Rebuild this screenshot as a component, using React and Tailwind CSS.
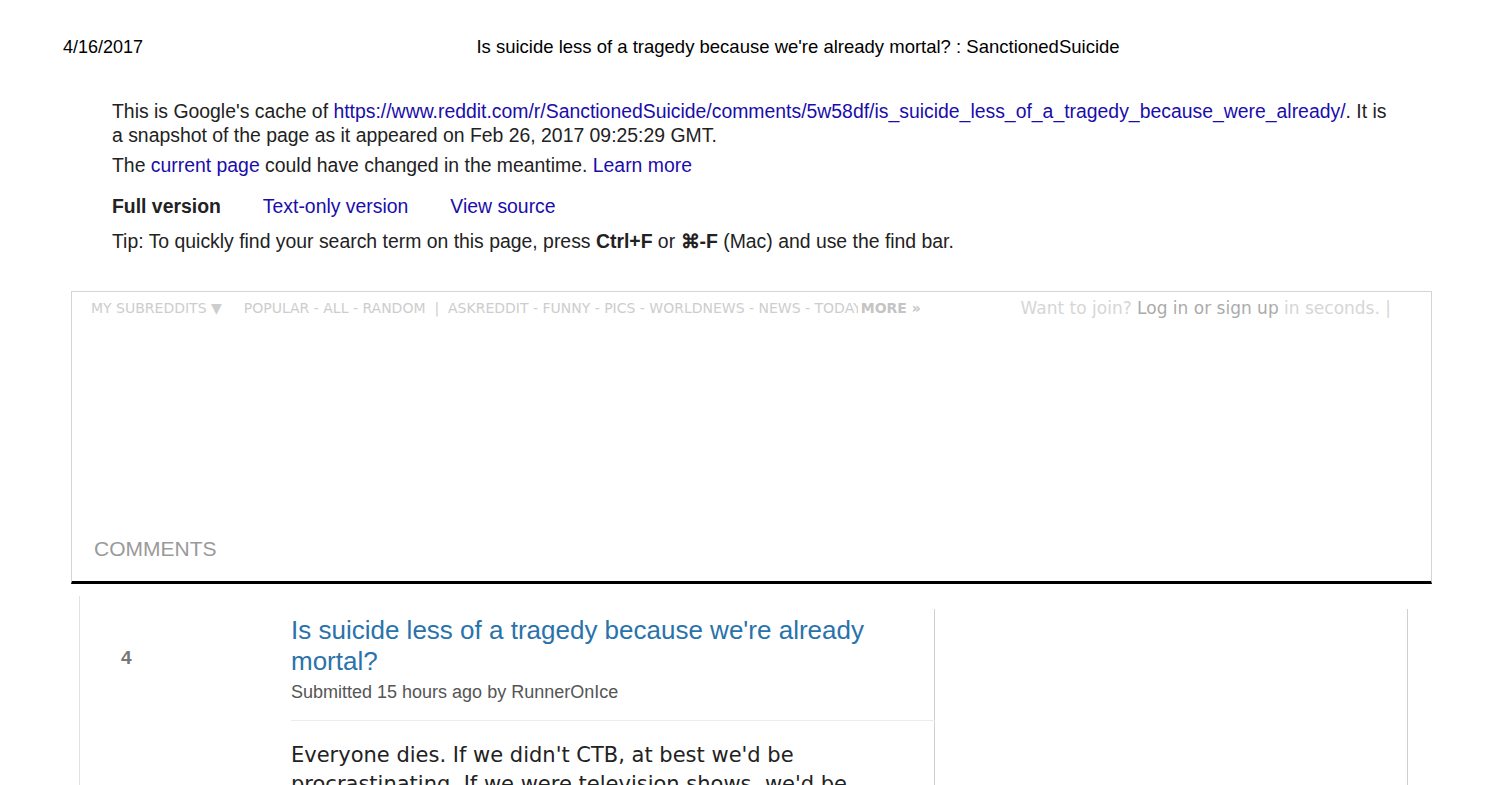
import React from 'react';

// Google cache print view of a reddit thread
const navLinks = ['ASKREDDIT', 'FUNNY', 'PICS', 'WORLDNEWS', 'NEWS', 'TODAYILEARNED'];

const App = () => {
  return (
    <div className="min-h-screen bg-white text-black font-['Liberation_Sans',Arial,sans-serif]">
      {/* print header */}
      <div className="flex pl-[63px] pr-[63px] pt-[37px] text-[18px] leading-[20px]">
        <div className="w-[96px] shrink-0">4/16/2017</div>
        <div className="flex-1 text-center text-[18.5px]">
          Is suicide less of a tragedy because we're already mortal? : SanctionedSuicide
        </div>
      </div>

      {/* cache notice */}
      <div className="pl-[112px] pr-[104px] mt-[42px] text-[19.4px] leading-[24px] text-[#222]">
        <p>
          This is Google's cache of{' '}
          <a className="text-[#1a0dab]">
            https://www.reddit.com/r/SanctionedSuicide/comments/5w58df/is_suicide_less_of_a_tragedy_because_were_already/
          </a>
          . It is a snapshot of the page as it appeared on Feb 26, 2017 09:25:29 GMT.
        </p>
        <p className="mt-[6px]">
          The <a className="text-[#1a0dab]">current page</a> could have changed in the meantime.{' '}
          <a className="text-[#1a0dab]">Learn more</a>
        </p>
        <div className="flex gap-[42px] mt-[17px]">
          <span className="font-bold">Full version</span>
          <a className="text-[#1a0dab]">Text-only version</a>
          <a className="text-[#1a0dab]">View source</a>
        </div>
        <p className="mt-[11px]">
          Tip: To quickly find your search term on this page, press <b>Ctrl+F</b> or <b>⌘-F</b> (Mac) and use the
          find bar.
        </p>
      </div>

      {/* reddit header box */}
      <div className="ml-[71px] mr-[68px] mt-[38px] border border-[#d4d4d4] border-b-[3px] border-b-black">
        <div className="flex items-center h-[33px] pl-[19px] pr-[40px] font-['DejaVu_Sans',Verdana,sans-serif] whitespace-nowrap">
          <span className="text-[14px] text-[#cdcdcd]">MY SUBREDDITS ▼</span>
          <div className="ml-[22px] w-[614px] overflow-hidden text-[14px] text-[#cdcdcd]">
            POPULAR - ALL - RANDOM&nbsp;&nbsp;|&nbsp;&nbsp;{navLinks.join(' - ')}
          </div>
          <span className="ml-[3px] text-[14px] font-bold text-[#c4c4c4]">MORE »</span>
          <div className="ml-auto text-[17px] text-[#d6d6d6]">
            Want to join? <span className="text-[#ababab]">Log in or sign up</span> in seconds. |
          </div>
        </div>
        <div className="h-[212px]" />
        <div className="pl-[22px] pb-[20px] text-[21px] leading-[24px] text-[#9a9a9a]">COMMENTS</div>
      </div>

      {/* thread */}
      <div className="ml-[79px] w-[1329px] mt-[12px] border-l border-[#e2e2e2] pt-[13px] flex">
        <div className="w-[211px] shrink-0 pt-[38px] pl-[41px]">
          <span className="text-[19px] leading-[20px] font-bold text-[#777]">4</span>
        </div>
        <div className="w-[644px] shrink-0 border-r border-[#d0d0d0] pt-[6px]">
          <h1 className="text-[26px] leading-[31px] text-[#2a72aa]">
            Is suicide less of a tragedy because we're already mortal?
          </h1>
          <div className="mt-[4px] text-[18px] leading-[22px] text-[#555]">Submitted 15 hours ago by RunnerOnIce</div>
          <div className="mt-[17px] border-t border-[#ececec] mr-[-1px]" />
          <div className="pt-[20px] pr-[30px] font-['DejaVu_Sans',Verdana,sans-serif] text-[21px] leading-[29px] text-[#222]">
            Everyone dies. If we didn't CTB, at best we'd be procrastinating. If we were television shows, we'd be
            cancelled sooner or later anyway.
          </div>
        </div>
        <div className="flex-1 border-r border-[#cfcfcf]" />
      </div>
    </div>
  );
};

export default App;
